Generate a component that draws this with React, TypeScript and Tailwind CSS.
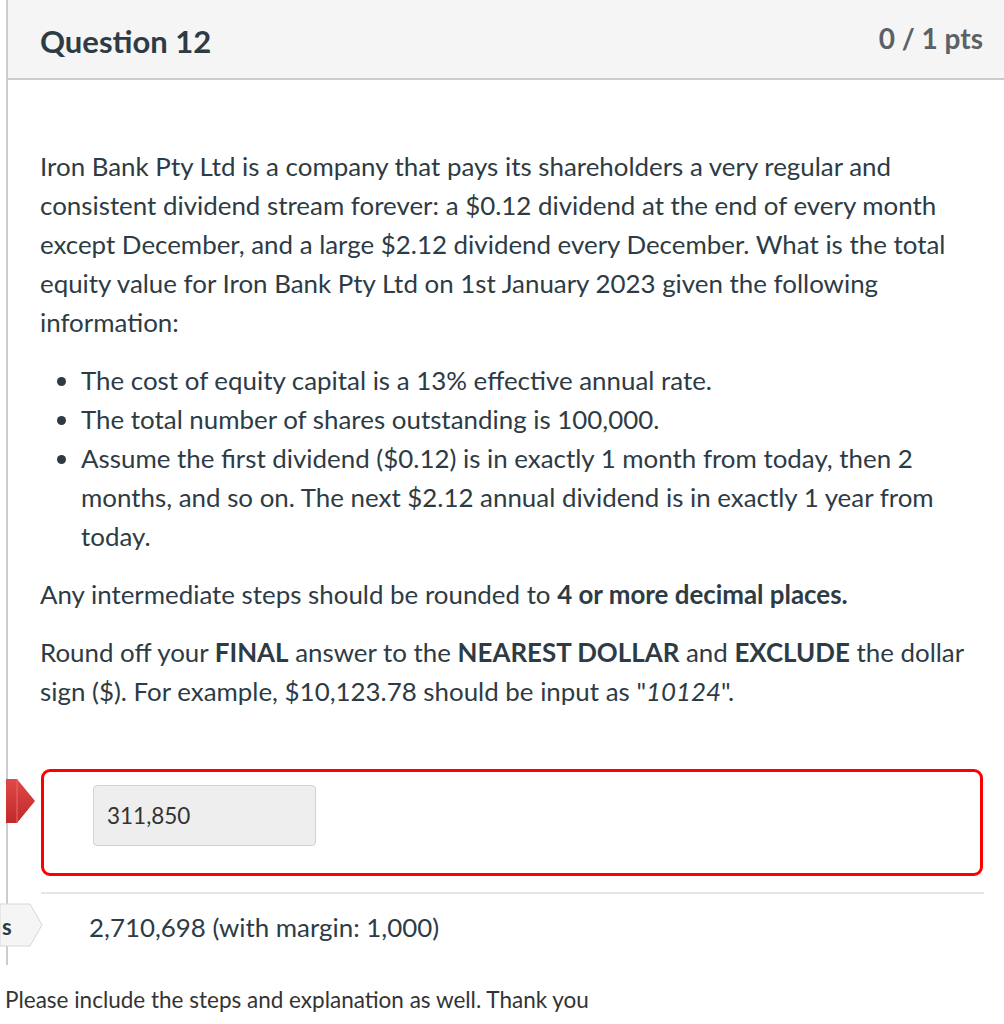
import React from "react";

const txt = "text-[#2d3b45]";

export default function App() {
  return (
    <div className="w-[1004px] h-[1024px] bg-white overflow-hidden" style={{ fontFamily: "Lato, 'Open Sans', sans-serif" }}>
      <div className="ml-[6px] border-l-2 border-[#c7cdd1] h-[965px]">
        <div className="h-[80px] bg-[#f5f5f5] border-b-2 border-[#c7cdd1] flex items-center justify-between pl-[32px] pr-[21px]">
          <div className={`text-[31px] font-bold ${txt} mt-[4px]`}>Question 12</div>
          <div className="text-[28px] font-bold text-[#5b6166] -mt-[2px]">0 / 1 pts</div>
        </div>
        <div className={`pl-[32px] pr-[20px] pt-[67px] text-[25.9px] leading-[39px] ${txt}`}>
          <p className="whitespace-nowrap">
            Iron Bank Pty Ltd is a company that pays its shareholders a very regular and
            <br />
            consistent dividend stream forever: a $0.12 dividend at the end of every month
            <br />
            except December, and a large $2.12 dividend every December. What is the total
            <br />
            equity value for Iron Bank Pty Ltd on 1st January 2023 given the following
            <br />
            information:
          </p>
          <ul className="mt-[19px] pl-[41px] list-disc whitespace-nowrap">
            <li>The cost of equity capital is a 13% effective annual rate.</li>
            <li>The total number of shares outstanding is 100,000.</li>
            <li>
              Assume the first dividend ($0.12) is in exactly 1 month from today, then 2
              <br />
              months, and so on. The next $2.12 annual dividend is in exactly 1 year from
              <br />
              today.
            </li>
          </ul>
          <p className="mt-[19px] whitespace-nowrap">
            Any intermediate steps should be rounded to <b>4 or more decimal places.</b>
          </p>
          <p className="mt-[19px] whitespace-nowrap">
            Round off your <b>FINAL</b> answer to the <b>NEAREST DOLLAR</b> and <b>EXCLUDE</b> the dollar
            <br />
            sign ($). For example, $10,123.78 should be input as "<i>10124</i>".
          </p>
        </div>
        <div className="relative mt-[58px] ml-[-8px]">
          <svg width="30" height="44" viewBox="0 0 30 44" className="absolute left-[6px] top-[10px]">
            <defs>
              <linearGradient id="rg" x1="0" x2="0" y1="0" y2="1">
                <stop offset="0" stopColor="#e14848" />
                <stop offset="1" stopColor="#c02a2a" />
              </linearGradient>
            </defs>
            <polygon points="0,0 11,0 29,22 11,44 0,44" fill="url(#rg)" />
            <line x1="11" y1="0" x2="11" y2="44" stroke="#e86a6a" strokeWidth="1" />
          </svg>
          <div className="ml-[41px] w-[942px] h-[107px] border-[3px] border-[#ff0000] rounded-[9px] flex items-start pt-[13px] pl-[49px]">
            <div className="w-[223px] h-[61px] bg-[#eeeeee] border border-[#d2d2d2] rounded-[4px] flex items-center pl-[13px] text-[22.5px] text-[#333333]">
              311,850
            </div>
          </div>
        </div>
        <div className="ml-[33px] mr-[20px] mt-[16px] border-t-2 border-[#e6e6e6]"></div>
        <div className="relative mt-[12px] h-[42px] flex items-center">
          <svg width="44" height="44" viewBox="0 0 44 44" className="absolute left-[-8px] top-[-3px]">
            <polygon points="0,1 30,1 42,22 30,43 0,43" fill="#f5f5f5" stroke="#d7d7d7" strokeWidth="1" />
          </svg>
          <span className={`absolute left-[-6px] top-[4px] text-[22px] ${txt} font-bold`}>s</span>
          <span className={`ml-[81px] text-[25.9px] ${txt}`}>2,710,698 (with margin: 1,000)</span>
        </div>
      </div>
      <div className="pl-[5px] pt-[18px] text-[22.5px] text-[#333333] whitespace-nowrap">
        Please include the steps and explanation as well. Thank you
      </div>
    </div>
  );
}
